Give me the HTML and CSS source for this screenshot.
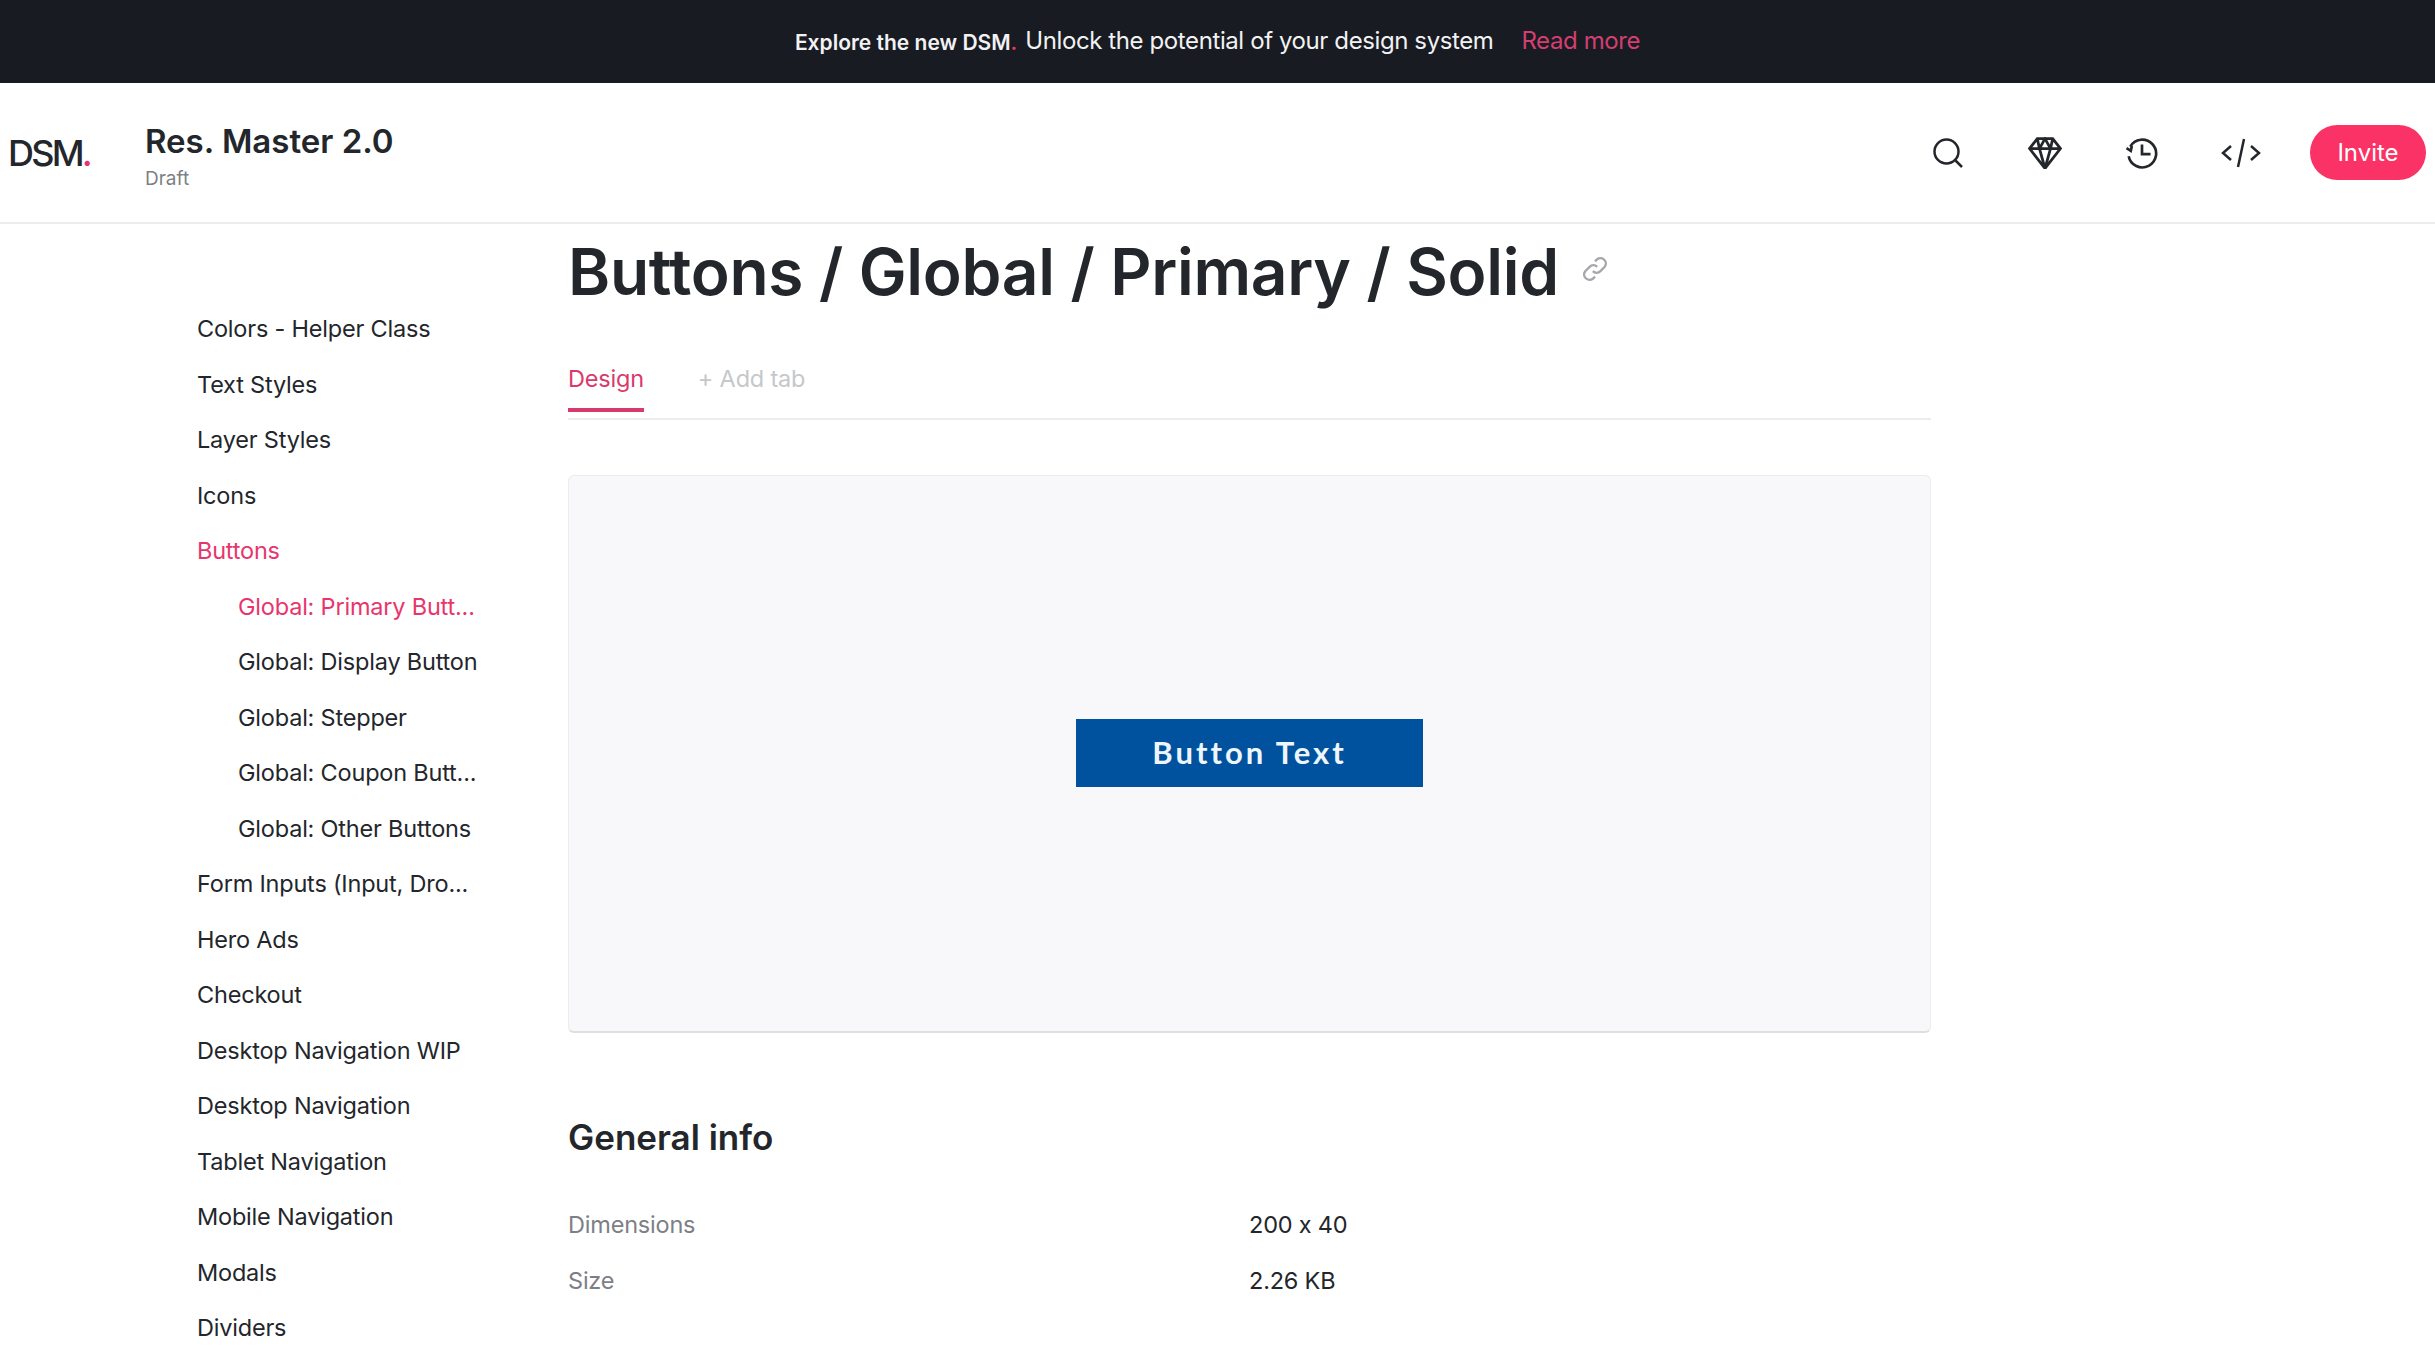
FILE: index.html
```html
<!DOCTYPE html>
<html lang="en">
<head>
  <meta charset="UTF-8">
  <title>Buttons / Global / Primary / Solid</title>
  <link rel="stylesheet" href="styles.css">
</head>
<body>

<div class="banner">
  <strong class="banner-lead">Explore the new DSM<span class="pink">.</span></strong>
  <span class="banner-text">Unlock the potential of your design system</span>
  <a class="banner-link">Read more</a>
</div>

<header class="topbar">
  <div class="logo">DSM<span class="pink">.</span></div>
  <div class="project">
    <div class="project-name">Res. Master 2.0</div>
    <div class="project-state">Draft</div>
  </div>
  <div class="actions">
    <svg class="icon" viewBox="0 0 32 32"><circle cx="14.5" cy="14.5" r="12"/><path d="M23.5 23.5L30 30"/></svg>
    <svg class="icon" viewBox="1 1.500 30 29"><path d="M9 3h14l7 9-14 18L2 12zM2 12h28M9 3l2 9 5 18 5-18 2-9M11 12l5-9 5 9"/></svg>
    <svg class="icon" viewBox="1 1 30 30"><path d="M5 10a13 13 0 1 1-1.500 9"/><path d="M1.500 11.500l4 2.500 1-4.500"/><path d="M16 8v9h8"/></svg>
    <svg class="icon icon-code" viewBox="0 0 40 32"><path d="M10 9l-8 7 8 7M30 9l8 7-8 7M23 2l-6 28"/></svg>
    <button class="invite">Invite</button>
  </div>
</header>

<div class="layout">
  <nav class="sidebar">
    <a class="nav-item">Colors - Helper Class</a>
    <a class="nav-item">Text Styles</a>
    <a class="nav-item">Layer Styles</a>
    <a class="nav-item">Icons</a>
    <a class="nav-item active">Buttons</a>
    <a class="nav-item sub active">Global: Primary Butt...</a>
    <a class="nav-item sub">Global: Display Button</a>
    <a class="nav-item sub">Global: Stepper</a>
    <a class="nav-item sub">Global: Coupon Butt...</a>
    <a class="nav-item sub">Global: Other Buttons</a>
    <a class="nav-item">Form Inputs (Input, Dro...</a>
    <a class="nav-item">Hero Ads</a>
    <a class="nav-item">Checkout</a>
    <a class="nav-item">Desktop Navigation WIP</a>
    <a class="nav-item">Desktop Navigation</a>
    <a class="nav-item">Tablet Navigation</a>
    <a class="nav-item">Mobile Navigation</a>
    <a class="nav-item">Modals</a>
    <a class="nav-item">Dividers</a>
  </nav>

  <main class="content">
    <div class="title-row">
      <h1>Buttons / Global / Primary / Solid</h1>
      <svg class="link-icon" viewBox="0 0 24 24"><path d="M10 14a5 5 0 0 0 7 0l4-4a5 5 0 0 0-7-7l-2 2"/><path d="M14 10a5 5 0 0 0-7 0l-4 4a5 5 0 0 0 7 7l2-2"/></svg>
    </div>

    <div class="tabs">
      <a class="tab active">Design</a>
      <a class="tab add">+ Add tab</a>
    </div>

    <div class="preview">
      <div class="sample-button">Button Text</div>
    </div>

    <h2>General info</h2>
    <div class="info-row"><span class="info-label">Dimensions</span><span>200 x 40</span></div>
    <div class="info-row"><span class="info-label">Size</span><span>2.26 KB</span></div>
  </main>
</div>

</body>
</html>
```

FILE: styles.css
```css
html, body {
  height: 1370px;
  overflow: hidden;
}

body {
  margin: 0;
  font-family: Inter, "Noto Sans", sans-serif;
  font-feature-settings: "calt" 0;
  color: #23262b;
  background: white;
}

.pink {
  color: #e8356d;
}

.banner {
  height: 83px;
  background: #181b21;
  color: #f2f2f4;
  display: flex;
  align-items: center;
  justify-content: center;
  font-size: 24px;
  letter-spacing: -0.4px;
  padding-bottom: 2px;
  box-sizing: border-box;
}

.banner-lead {
  font-size: 21px;
  font-weight: 600;
  letter-spacing: 0;
  margin-right: 8px;
  padding-top: 3px;
}

.banner-link {
  color: #d23f70;
  margin-left: 28px;
}

.topbar {
  height: 139px;
  border-bottom: 2px solid #ececee;
  display: flex;
  align-items: center;
}

.logo {
  width: 145px;
  padding-left: 8px;
  box-sizing: border-box;
  font-size: 36px;
  font-weight: 500;
  letter-spacing: -2.800px;
}

.project {
  flex: 1;
  margin-top: 6px;
}

.project-name {
  font-size: 33px;
  font-weight: 600;
  line-height: 40px;
}

.project-state {
  font-size: 19px;
  color: #7d7f85;
  line-height: 24px;
  margin-top: 6px;
}

.actions {
  display: flex;
  align-items: center;
  gap: 61px;
  padding-right: 9px;
}

.icon {
  width: 36px;
  height: 32px;
  fill: none;
  stroke: #23262b;
  stroke-width: 2.5;
}

.icon-code {
  width: 40px;
}

.invite {
  width: 116px;
  height: 55px;
  margin-left: -12px;
  border: none;
  border-radius: 28px;
  background: #fb3266;
  color: white;
  font-family: inherit;
  font-size: 24px;
}

.layout {
  display: flex;
}

.sidebar {
  width: 568px;
  box-sizing: border-box;
  padding: 77px 0 0 197px;
}

.nav-item {
  display: block;
  height: 55.500px;
  line-height: 55.500px;
  font-size: 23.500px;
  letter-spacing: -0.200px;
  white-space: nowrap;
}

.nav-item.sub {
  padding-left: 41px;
}

.nav-item.active {
  color: #e8356d;
}

.content {
  width: 1363px;
}

.title-row {
  display: flex;
  align-items: center;
  height: 100px;
  margin-top: -2px;
}

h1 {
  margin: 0;
  font-size: 64px;
  font-weight: 600;
  letter-spacing: -0.300px;
  line-height: 100px;
}

.link-icon {
  width: 26px;
  height: 26px;
  margin: -6px 0 0 23px;
  fill: none;
  stroke: #a5a7ab;
  stroke-width: 2.2;
}

.tabs {
  display: flex;
  gap: 54px;
  height: 98px;
  border-bottom: 2px solid #ececee;
  box-sizing: border-box;
  padding-top: 37px;
  font-size: 23.500px;
  letter-spacing: -0.200px;
}

.tab.active {
  color: #d93a6c;
  height: 53px;
  line-height: 40px;
  border-bottom: 4px solid #d93a6c;
  box-sizing: border-box;
}

.tab.add {
  color: #c5c7cb;
  line-height: 40px;
}

.preview {
  height: 558px;
  margin-top: 55px;
  background: #f8f8fa;
  border: 1px solid #ececee;
  border-bottom: 2px solid #dfdfe2;
  border-radius: 6px;
  box-sizing: border-box;
  display: flex;
  align-items: center;
  justify-content: center;
}

.sample-button {
  width: 347px;
  height: 68px;
  margin-bottom: 2px;
  line-height: 66px;
  text-align: center;
  background: #00529f;
  color: #eef5fb;
  font-size: 31px;
  font-weight: 700;
  letter-spacing: 3px;
  font-family: Lato, sans-serif;
}

h2 {
  margin: 79px 0 35px;
  font-size: 35px;
  font-weight: 600;
  line-height: 50px;
}

.info-row {
  display: grid;
  grid-template-columns: 681px 1fr;
  height: 56px;
  line-height: 56px;
  font-size: 23.500px;
  letter-spacing: -0.200px;
}

.info-label {
  color: #7d7f85;
}
```
